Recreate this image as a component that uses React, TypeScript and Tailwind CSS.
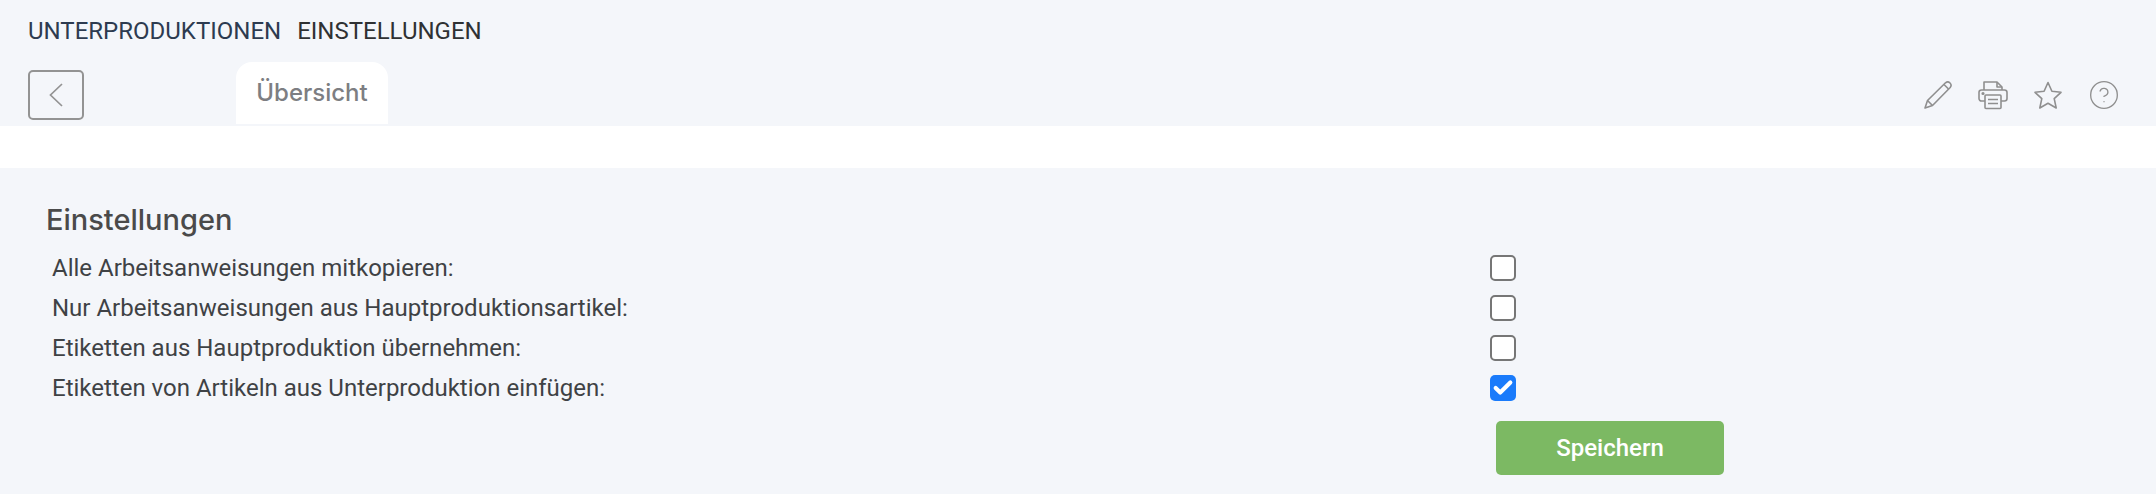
import { Check, CircleHelp } from "lucide-react";

const settings = [
    { label: "Alle Arbeitsanweisungen mitkopieren:", checked: false },
    { label: "Nur Arbeitsanweisungen aus Hauptproduktionsartikel:", checked: false },
    { label: "Etiketten aus Hauptproduktion übernehmen:", checked: false },
    { label: "Etiketten von Artikeln aus Unterproduktion einfügen:", checked: true },
];

function PencilIcon() {
    return (
        <svg width="30" height="30" viewBox="0 0 30 30" fill="none" stroke="#8f8f8f" strokeWidth="1.6" strokeLinejoin="round">
            <path d="M2 28 L4.5 20.5 L22.5 2.8 C24 1.6 25.8 1.8 27 3 C28.2 4.2 28.4 6 27.2 7.5 L9.5 25.5 Z" />
            <path d="M4.5 20.5 L9.5 25.5" />
            <path d="M21 4.5 L25.5 9" />
        </svg>
    );
}

function PrinterIcon() {
    return (
        <svg width="30" height="30" viewBox="0 0 30 30" fill="none" stroke="#8f8f8f" strokeWidth="1.6" strokeLinejoin="round">
            <path d="M6 10 V2 H19 L24 7 V10" />
            <path d="M19 2 V7 H24" />
            <path d="M7 21 H3.5 C2.2 21 1 20 1 18.5 V12.5 C1 11 2.2 10 3.5 10 H26.5 C27.8 10 29 11 29 12.5 V18.5 C29 20 27.8 21 26.5 21 H23" />
            <rect x="7" y="15" width="16" height="13.5" rx="1" />
            <path d="M10 19.5 H20 M10 23.5 H20" />
            <circle cx="5" cy="13.5" r="0.8" fill="#8f8f8f" />
        </svg>
    );
}

function StarIcon() {
    return (
        <svg width="30" height="30" viewBox="0 0 30 30" fill="none" stroke="#8f8f8f" strokeWidth="1.6" strokeLinejoin="round">
            <path d="M15 2.5 L18.9 11.3 L28 12.3 L21.2 18.7 L23.2 28 L15 23.2 L6.8 28 L8.8 18.7 L2 12.3 L11.1 11.3 Z" />
        </svg>
    );
}

function BackChevron() {
    return (
        <svg width="14" height="24" viewBox="0 0 14 24" fill="none" stroke="#939393" strokeWidth="1.7">
            <path d="M13 1 L1.5 12 L13 23" />
        </svg>
    );
}

export default function App() {
    return (
        <div className="min-h-[494px] bg-[#f4f6fa] font-['Roboto',sans-serif]">
            {/* Header */}
            <div className="h-[126px] px-7 pt-[19px]">
                <div className="flex gap-4 text-[24px] leading-[24px] h-[24px]">
                    <span className="text-[#2d3b50]">UNTERPRODUKTIONEN</span>
                    <span className="text-[#2f3133]">EINSTELLUNGEN</span>
                </div>
                <div className="flex items-start mt-[27px]">
                    <button className="w-[56px] h-[50px] flex items-center justify-center border-2 border-[#939393] rounded-[5px]">
                        <BackChevron />
                    </button>
                    <div className="ml-[152px] -mt-[8px] w-[152px] h-[62px] bg-white rounded-t-[16px] flex items-center justify-center font-['Inter',sans-serif] text-[24px] font-medium text-[#7d7e82]">
                        Übersicht
                    </div>
                    <div className="ml-auto mr-[8px] mt-[9px] flex items-center gap-[25px]">
                        <PencilIcon />
                        <PrinterIcon />
                        <StarIcon />
                        <CircleHelp className="w-[32px] h-[32px] text-[#8f8f8f]" strokeWidth={1} />
                    </div>
                </div>
            </div>

            <div className="h-[42px] bg-white" />

            {/* Settings */}
            <div className="pl-[46px] pt-[34px]">
                <h2 className="font-['Inter',sans-serif] text-[29px] leading-[36px] font-medium text-[#4a4a4a]">Einstellungen</h2>
                <div className="mt-[10px] pl-[6px]">
                    {settings.map((s) => (
                        <div key={s.label} className="h-10 flex items-center">
                            <span className="w-[1438px] text-[24px] text-[#3f4245]">{s.label}</span>
                            {s.checked ? (
                                <span className="w-[26px] h-[26px] rounded-[5px] bg-[#1a7bfb] flex items-center justify-center">
                                    <Check className="w-[22px] h-[22px] text-white" strokeWidth={4.5} />
                                </span>
                            ) : (
                                <span className="w-[26px] h-[26px] rounded-[5px] bg-white border-2 border-[#767676]" />
                            )}
                        </div>
                    ))}
                </div>
                <button className="ml-[1450px] mt-[13px] w-[228px] h-[54px] bg-[#7cb963] rounded-[5px] text-white text-[24px] font-medium">
                    Speichern
                </button>
            </div>
        </div>
    );
}
